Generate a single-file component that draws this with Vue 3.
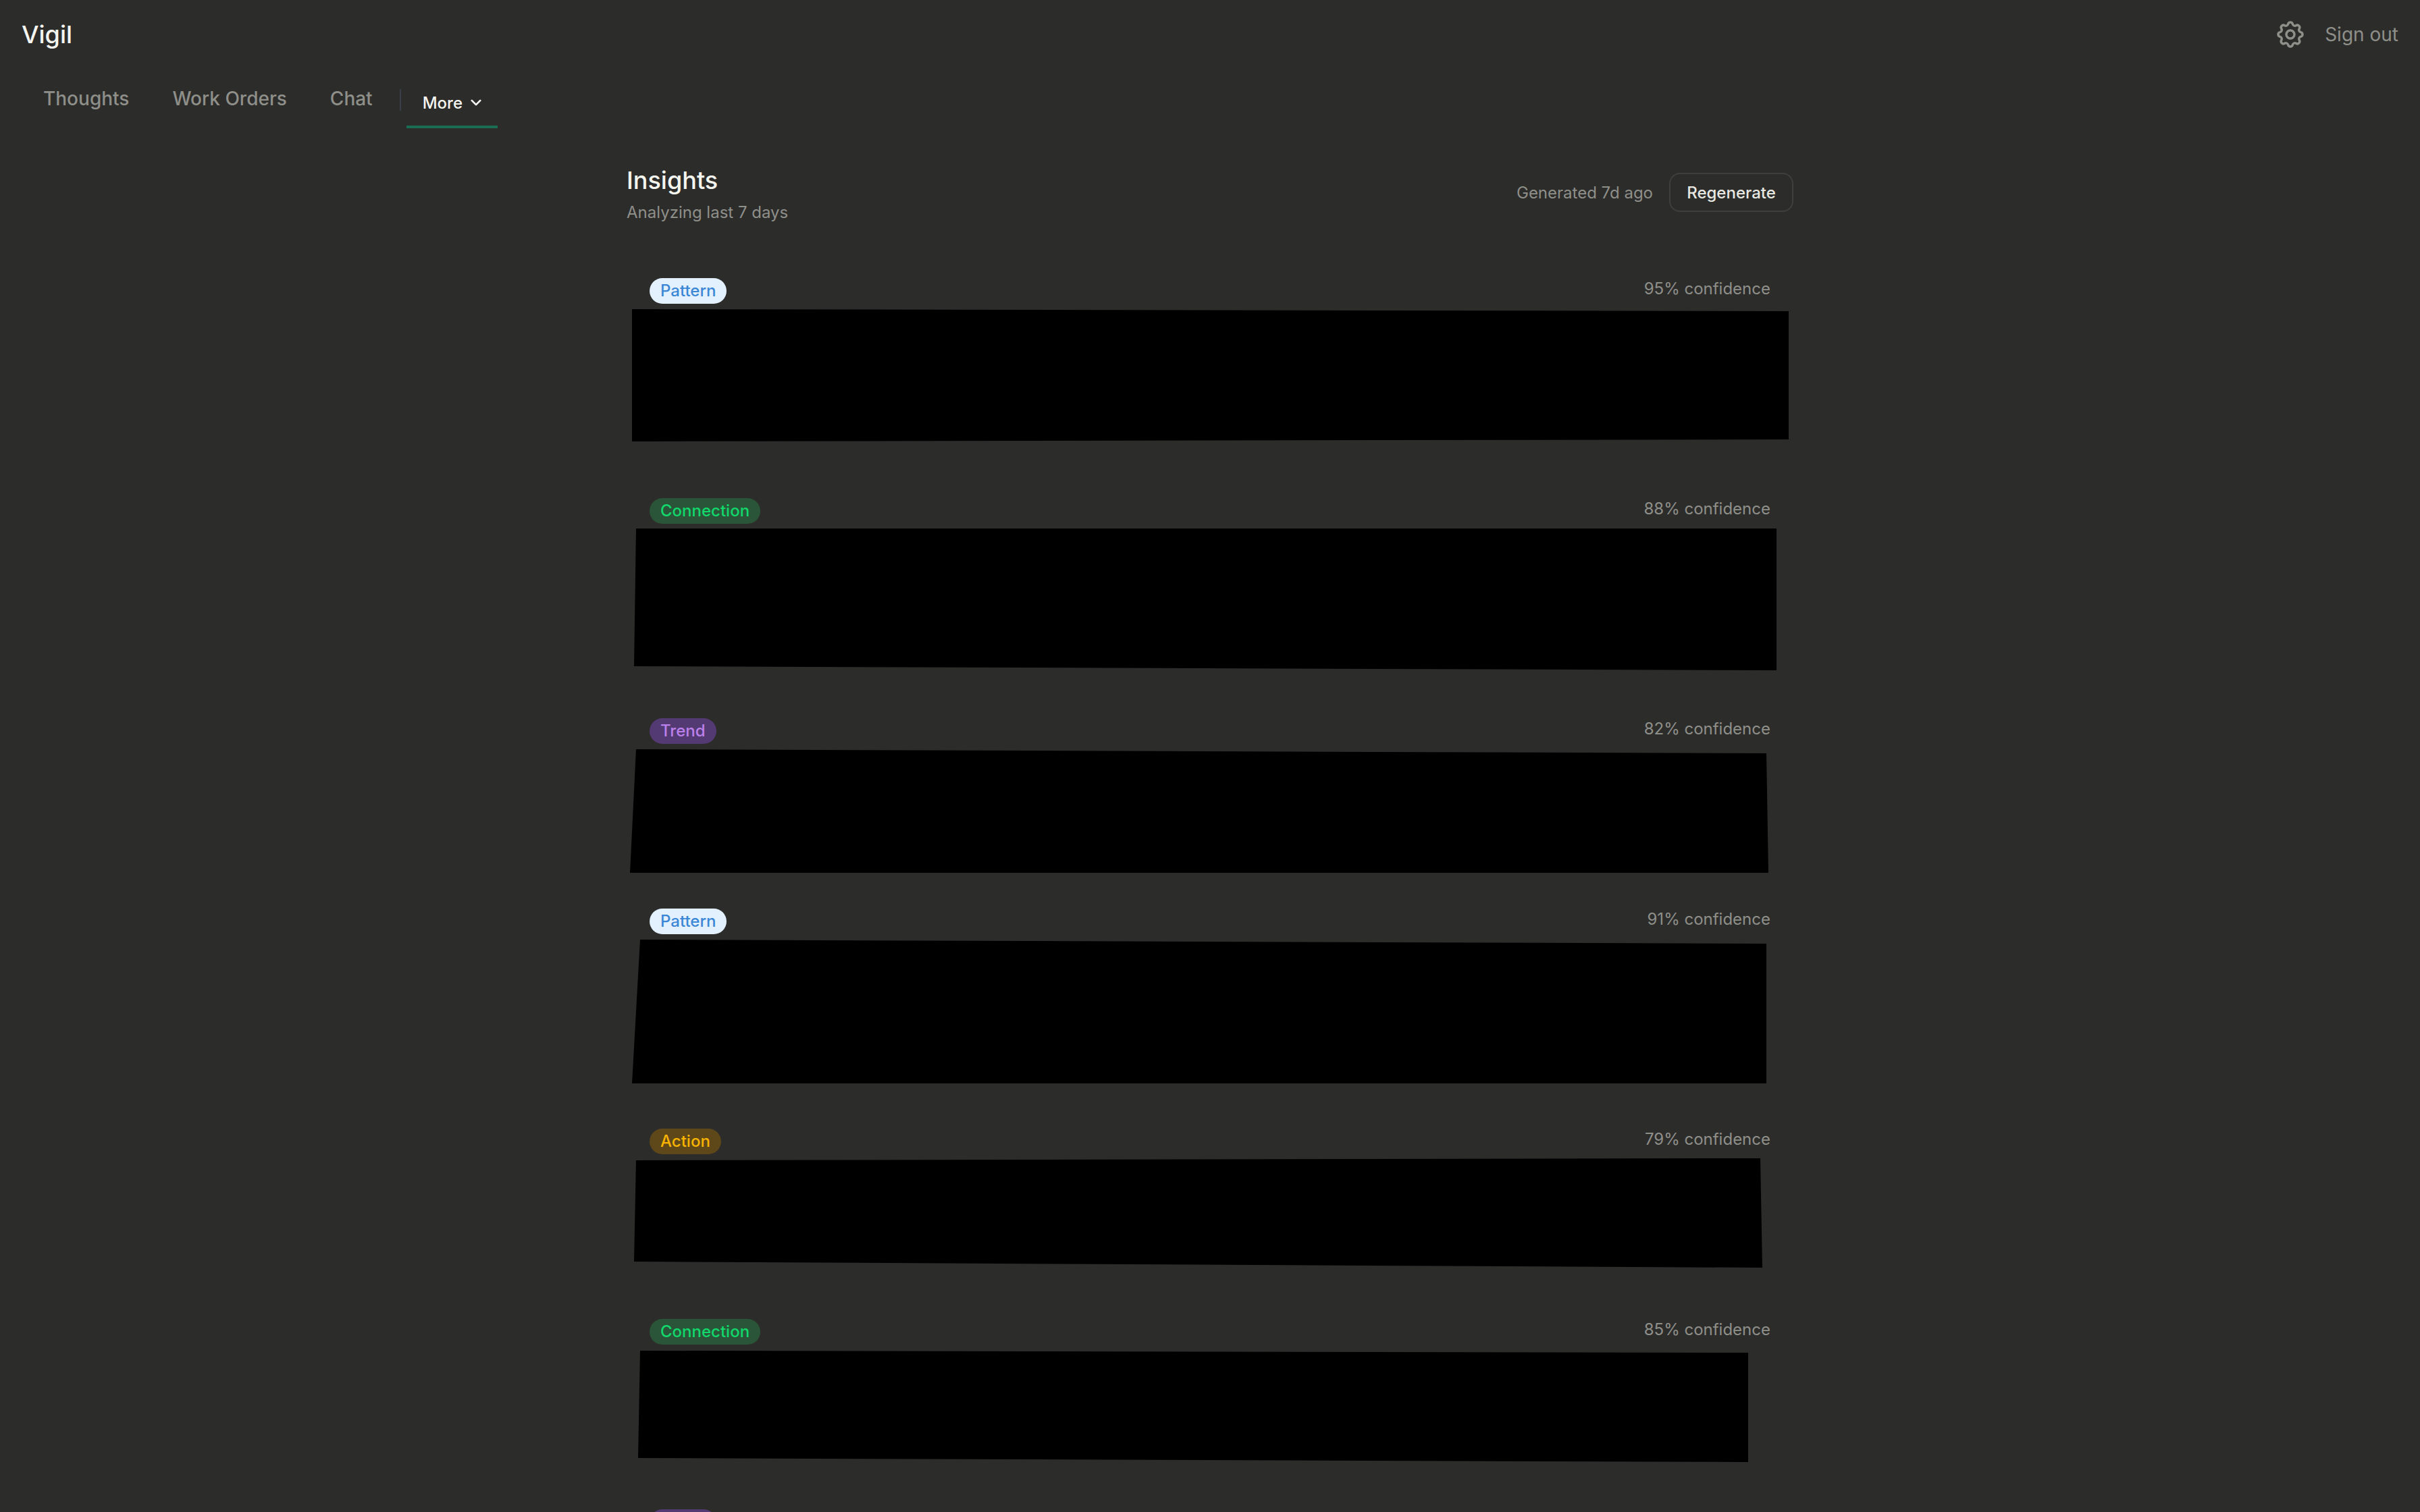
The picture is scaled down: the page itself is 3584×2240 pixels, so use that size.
<script setup>
const tabs = ['Thoughts', 'Work Orders', 'Chat']

const insights = [
  { kind: 'pattern', label: 'Pattern', confidence: 95, lines: 4, top: 378, quad: [[936, 458], [2649, 461], [2649, 651], [936, 654]] },
  { kind: 'connection', label: 'Connection', confidence: 88, lines: 4, top: 704, quad: [[942, 783], [2631, 783], [2631, 993], [939, 987]] },
  { kind: 'trend', label: 'Trend', confidence: 82, lines: 3, top: 1030, quad: [[942, 1110], [2616, 1116], [2619, 1293], [933, 1293]] },
  { kind: 'pattern', label: 'Pattern', confidence: 91, lines: 4, top: 1312, quad: [[948, 1392], [2616, 1398], [2616, 1605], [936, 1605]] },
  { kind: 'action', label: 'Action', confidence: 79, lines: 3, top: 1638, quad: [[942, 1719], [2607, 1716], [2610, 1878], [939, 1869]] },
  { kind: 'connection', label: 'Connection', confidence: 85, lines: 3, top: 1920, quad: [[948, 2001], [2589, 2004], [2589, 2166], [945, 2160]] },
  { kind: 'trend', label: 'Trend', confidence: 77, lines: 3, top: 2201, quad: null }
]

function clip(item) {
  const pts = item.quad.map(([x, y]) => `${x - 928}px ${y - item.top}px`).join(', ')
  return { clipPath: `polygon(${pts})` }
}
</script>

<template>
  <div class="page">
    <header class="topbar">
      <span class="logo">Vigil</span>
      <div class="account">
        <svg class="gear" viewBox="0 0 24 24" fill="none" stroke="currentColor" stroke-width="1.75" stroke-linecap="round" stroke-linejoin="round">
          <path d="M10.325 4.317c.426-1.756 2.924-1.756 3.35 0a1.724 1.724 0 0 0 2.573 1.066c1.543-.94 3.31.826 2.37 2.37a1.724 1.724 0 0 0 1.065 2.572c1.756.426 1.756 2.924 0 3.35a1.724 1.724 0 0 0-1.066 2.573c.94 1.543-.826 3.31-2.37 2.37a1.724 1.724 0 0 0-2.572 1.065c-.426 1.756-2.924 1.756-3.35 0a1.724 1.724 0 0 0-2.573-1.066c-1.543.94-3.31-.826-2.37-2.37a1.724 1.724 0 0 0-1.065-2.572c-1.756-.426-1.756-2.924 0-3.35a1.724 1.724 0 0 0 1.066-2.573c-.94-1.543.826-3.31 2.37-2.37c1 .608 2.296.07 2.572-1.065z" />
          <circle cx="12" cy="12" r="3" />
        </svg>
        <span class="signout">Sign out</span>
      </div>
    </header>

    <nav class="tabs">
      <a v-for="tab in tabs" :key="tab" class="tab">{{ tab }}</a>
      <span class="divider"></span>
      <button class="more">
        More
        <svg class="chev" viewBox="0 0 16 16" fill="none" stroke="currentColor" stroke-width="2.2" stroke-linecap="round" stroke-linejoin="round">
          <path d="M3 5.5l5 5 5-5" />
        </svg>
      </button>
    </nav>

    <main class="content">
      <div class="head">
        <div>
          <h1 class="title">Insights</h1>
          <p class="sub">Analyzing last 7 days</p>
        </div>
        <div class="actions">
          <span class="generated">Generated 7d ago</span>
          <button class="regen">Regenerate</button>
        </div>
      </div>

      <section class="list">
        <article v-for="(item, i) in insights" :key="i" class="card">
          <div class="card-head">
            <span class="badge" :class="item.kind">{{ item.label }}</span>
            <span class="confidence">{{ item.confidence }}% confidence</span>
          </div>
          <div class="card-body" :class="'lines-' + item.lines"></div>
          <div v-if="item.quad" class="redact" :style="clip(item)"></div>
        </article>
      </section>
    </main>
  </div>
</template>

<style>
html, body {
  margin: 0;
  background: #2c2c2b;
  overflow: hidden;
}
</style>

<style scoped>
.page {
  height: 2240px;
  overflow: hidden;
  background: #2c2c2b;
  font-family: Inter, "Liberation Sans", sans-serif;
  color: #f5f5f0;
}
.topbar {
  height: 100px;
  box-sizing: border-box;
  padding: 2px 32px 0;
  display: flex;
  align-items: center;
  justify-content: space-between;
}
.logo {
  font-size: 36px;
  font-weight: 500;
}
.account {
  display: flex;
  align-items: center;
  gap: 27px;
  color: #8f8f8a;
}
.gear {
  width: 48px;
  height: 48px;
}
.signout {
  font-size: 28px;
}
.tabs {
  height: 90px;
  padding-left: 32px;
  display: flex;
  align-items: flex-start;
}
.tab {
  padding: 29px 32px 0;
  font-size: 28px;
  line-height: 34px;
  font-weight: 500;
  color: #8f8f8a;
}
.divider {
  width: 2px;
  height: 32px;
  margin: 32px 8px 0 8px;
  background: #3b3f4a;
}
.more {
  height: 90px;
  width: 135px;
  box-sizing: border-box;
  padding: 18px 0 0 24px;
  display: flex;
  align-items: center;
  justify-content: flex-start;
  gap: 10px;
  background: none;
  border: 0;
  border-bottom: 4px solid #1a6d53;
  font: 500 24px Inter, sans-serif;
  color: #f5f5f0;
}
.chev {
  width: 20px;
  height: 20px;
}
.content {
  width: 1728px;
  margin: 0 auto;
  padding-top: 50px;
}
.head {
  display: flex;
  align-items: center;
  justify-content: space-between;
}
.title {
  margin: 0;
  font-size: 36px;
  line-height: 54px;
  font-weight: 500;
}
.sub {
  margin: 4px 0 0;
  font-size: 24px;
  line-height: 34px;
  color: #8f8f8a;
}
.actions {
  display: flex;
  align-items: center;
  gap: 24px;
  margin-bottom: 2px;
}
.generated {
  font-size: 24px;
  color: #8f8f8a;
}
.regen {
  height: 58px;
  width: 184px;
  box-sizing: border-box;
  background: none;
  border: 2px solid #3f3f3d;
  border-radius: 16px;
  font: 500 24px Inter, sans-serif;
  color: #e8e8e3;
}
.list {
  margin-top: 46px;
}
.card {
  position: relative;
  box-sizing: border-box;
  padding: 34px 34px 34px;
  margin-bottom: 28px;
}
.card-head {
  display: flex;
  align-items: flex-start;
  justify-content: space-between;
}
.badge {
  height: 38px;
  padding: 0 16px;
  border-radius: 19px;
  font-size: 24px;
  line-height: 38px;
  font-weight: 500;
}
.badge.pattern {
  background: #e3f0fd;
  color: #3b87d6;
}
.badge.connection {
  background: #2a5539;
  color: #12d86c;
}
.badge.trend {
  background: #543a73;
  color: #bc80ec;
}
.badge.action {
  background: #5e4719;
  color: #f9b400;
}
.confidence {
  font-size: 24px;
  line-height: 32px;
  color: #8f8f8a;
}
.card-body {
  margin-top: 16px;
}
.lines-4 {
  height: 176px;
}
.lines-3 {
  height: 132px;
}
.redact {
  position: absolute;
  top: 0;
  left: 0;
  width: 1728px;
  height: 300px;
  background: #000;
}
</style>
